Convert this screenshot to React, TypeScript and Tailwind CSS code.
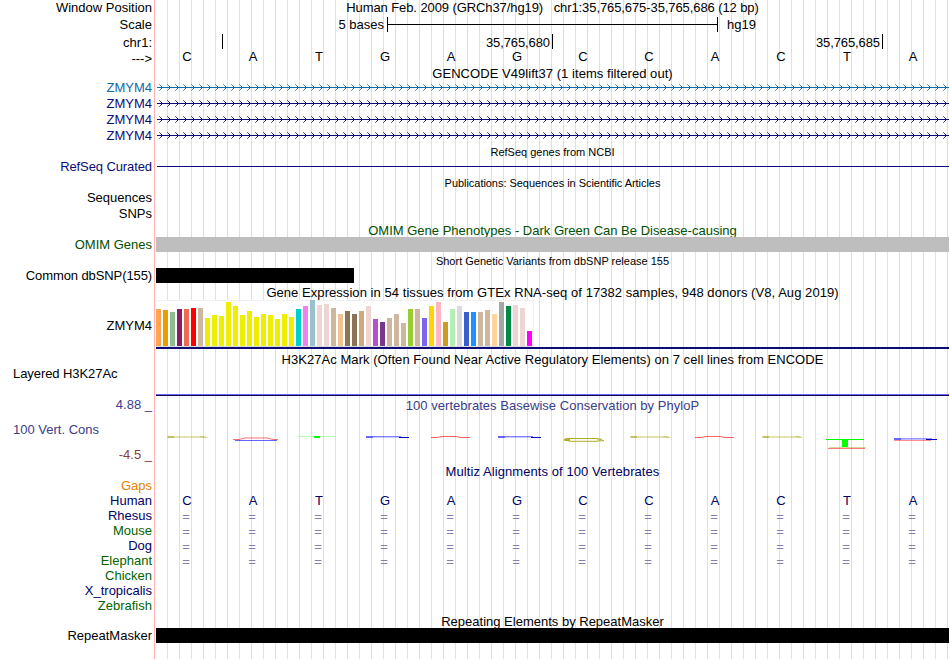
import type { ReactNode } from 'react';
import clsx from 'clsx';

const SEQUENCE = ['C', 'A', 'T', 'G', 'A', 'G', 'C', 'C', 'A', 'C', 'T', 'A'];

// [height in px, colour] for each tissue, in GTEx order
const TISSUES: [number, string][] = [
  [37, '#ffa54f'],
  [36, '#ee9a00'],
  [34, '#8fbc8f'],
  [37, '#8b1c62'],
  [37, '#ee6a50'],
  [38, '#ff0000'],
  [38, '#cdb79e'],
  [28, '#eeee00'],
  [31, '#eeee00'],
  [30, '#eeee00'],
  [44, '#eeee00'],
  [40, '#eeee00'],
  [31, '#eeee00'],
  [35, '#eeee00'],
  [29, '#eeee00'],
  [32, '#eeee00'],
  [31, '#eeee00'],
  [27, '#eeee00'],
  [32, '#eeee00'],
  [29, '#eeee00'],
  [37, '#00cdcd'],
  [40, '#ee82ee'],
  [46, '#9ac0cd'],
  [41, '#eed5d2'],
  [42, '#eed5d2'],
  [38, '#cdb79e'],
  [32, '#eec591'],
  [35, '#8b7355'],
  [32, '#8b7355'],
  [35, '#cdaa7d'],
  [40, '#eed5d2'],
  [27, '#b452cd'],
  [24, '#7a378b'],
  [28, '#cdb79e'],
  [32, '#cdb79e'],
  [23, '#cdb79e'],
  [37, '#9acd32'],
  [37, '#cdb79e'],
  [28, '#7a67ee'],
  [40, '#ffd700'],
  [44, '#ffb6c1'],
  [24, '#cd9b1d'],
  [37, '#b4eeb4'],
  [40, '#d9d9d9'],
  [34, '#3a5fcd'],
  [34, '#1e90ff'],
  [34, '#cdb79e'],
  [36, '#cdb79e'],
  [32, '#ffd39b'],
  [44, '#a6a6a6'],
  [40, '#008b45'],
  [41, '#eed5d2'],
  [38, '#eed5d2'],
  [15, '#ff00ff'],
];

const SPECIES = [
  { name: 'Rhesus', color: 'text-[#000064]', aligned: true },
  { name: 'Mouse', color: 'text-[#006400]', aligned: true },
  { name: 'Dog', color: 'text-[#000064]', aligned: true },
  { name: 'Elephant', color: 'text-[#006400]', aligned: true },
  { name: 'Chicken', color: 'text-[#006400]', aligned: false },
  { name: 'X_tropicalis', color: 'text-[#000064]', aligned: false },
  { name: 'Zebrafish', color: 'text-[#006400]', aligned: false },
];

interface RowProps {
  label?: string;
  height: string;
  className?: string;
  labelClassName?: string;
  children?: ReactNode;
}

function Row({ label, height, className, labelClassName, children }: RowProps) {
  return (
    <div className={clsx('flex shrink-0', height, className)}>
      <div
        className={clsx(
          'w-[156px] shrink-0 flex items-center justify-end pr-1 whitespace-pre',
          labelClassName
        )}
      >
        {label}
      </div>
      <div className="w-[793px] shrink-0">{children}</div>
    </div>
  );
}

function Title({
  height,
  className,
  children,
}: {
  height: string;
  className?: string;
  children: ReactNode;
}) {
  return (
    <Row height={height}>
      <div
        className={clsx(
          'h-full flex items-center justify-center whitespace-pre',
          className
        )}
      >
        {children}
      </div>
    </Row>
  );
}

function Bases({ bases, className }: { bases: string[]; className?: string }) {
  return (
    <div className={clsx('h-full flex items-center', className)}>
      {bases.map((base, i) => (
        <span key={i} className="w-[66px] shrink-0 text-center">
          {base}
        </span>
      ))}
    </div>
  );
}

function Transcript({ id, color }: { id: string; color: string }) {
  return (
    <svg width="793" height="16" shapeRendering="crispEdges" className="block">
      <pattern id={id} x="2" width="8" height="16" patternUnits="userSpaceOnUse">
        <g fill={color}>
          <path d="M1 4h1v1h-1zM1 10h1v1h-1z" opacity="0.6" />
          <path d="M2 5h1v1h-1zM2 9h1v1h-1z" opacity="0.8" />
          <path d="M3 6h1v1h-1zM3 8h1v1h-1z" />
        </g>
      </pattern>
      <rect x="1" width="792" height="16" fill={`url(#${id})`} />
      <rect x="1" y="7" width="792" height="1" fill={color} />
    </svg>
  );
}

function FlatC({ x }: { x: number }) {
  return (
    <g fill="#a8a820">
      <rect x={x} y="22" width="39" height="2" opacity="0.35" />
      <rect x={x + 1} y="22" width="6" height="2" opacity="0.55" />
      <rect x={x + 33} y="22" width="4" height="1" opacity="0.4" />
      <rect x={x + 35} y="23" width="6" height="1" opacity="0.3" />
    </g>
  );
}

function FlatA({ x }: { x: number }) {
  return (
    <path
      d={`M${x} 23.5h6l5-1h14l5 1h9`}
      fill="none"
      stroke="#ff2020"
      strokeWidth="1"
      opacity="0.7"
    />
  );
}

function FlatG({ x }: { x: number }) {
  return (
    <g fill="#0000ff">
      <rect x={x} y="22" width="7" height="2" opacity="0.6" />
      <rect x={x + 7} y="22" width="28" height="1" opacity="0.5" />
      <rect x={x + 7} y="23" width="26" height="1" opacity="0.2" />
      <rect x={x + 33} y="23" width="10" height="1" fill="#0000c8" />
    </g>
  );
}

function Conservation() {
  return (
    <svg width="793" height="36" className="block overflow-visible">
      <FlatC x={11} />
      <g fill="none">
        <path d="M77 25.5h6l6-1.5h22l6 1.5h5" stroke="#ff2020" opacity="0.65" />
        <path d="M79 26.5h42" stroke="#0000ff" opacity="0.6" />
      </g>
      <rect x="142" y="22" width="38" height="1" fill="#b0ffb0" />
      <rect x="158" y="22" width="6" height="2" fill="#00ff00" />
      <FlatG x={210} />
      <FlatA x={275} />
      <FlatG x={342} />
      <g fill="none" stroke="#a0a000">
        <path d="M409 25l5-.5h26l6 .8M409 26l5 1.3h26l8-.8" opacity="0.85" />
        <path d="M408 25.8h6" strokeWidth="2" opacity="0.8" />
        <path d="M441 25.8h5" opacity="0.5" />
      </g>
      <FlatC x={474} />
      <FlatA x={539} />
      <FlatC x={606} />
      <rect x="670" y="25" width="38" height="1" fill="#00ff00" />
      <rect x="686" y="25" width="6" height="8" fill="#00ff00" />
      <rect x="673" y="33" width="37" height="1" fill="#b0b040" opacity="0.5" />
      <rect x="672" y="34" width="37" height="1" fill="#ff4040" opacity="0.7" />
      <g fill="#0000ff">
        <rect x="738" y="24" width="7" height="2" opacity="0.6" />
        <rect x="745" y="24" width="31" height="1" opacity="0.4" />
        <rect x="745" y="25" width="27" height="1" opacity="0.25" />
        <rect x="770" y="25" width="11" height="1" fill="#0000c8" />
        <rect x="738" y="26" width="37" height="1" fill="#ff2020" opacity="0.5" />
      </g>
    </svg>
  );
}

export default function App() {
  return (
    <div className="w-[950px] h-[659px] overflow-hidden bg-white font-['Liberation_Sans',Arial,sans-serif] text-[13px] leading-none text-black">
      <div className="h-full flex flex-col bg-[linear-gradient(90deg,#fff_154px,#ffb0b0_154px,#ffb0b0_155px,#fff_155px,#fff_156px,transparent_156px),repeating-linear-gradient(90deg,transparent_0px,transparent_11px,#dcdcfa_11px,#dcdcfa_12px)]">
        <Row
          label="Window Position"
          height="h-[17px]"
          labelClassName="pb-0.5"
        >
          <div className="h-[15px] flex items-center justify-center whitespace-pre tracking-[-0.09px]">
            {'Human Feb. 2009 (GRCh37/hg19)   chr1:35,765,675-35,765,686 (12 bp)'}
          </div>
        </Row>
        <Row label="Scale" height="h-[17px]" labelClassName="pb-0.5">
          <div className="h-[15px] flex items-center">
            <span className="w-[228px] text-right">5 bases</span>
            <div className="ml-[3px] w-[331px] h-[15px] border-x border-black flex items-center">
              <div className="w-full h-px bg-black" />
            </div>
            <span className="ml-[9px]">hg19</span>
          </div>
        </Row>
        <Row label="chr1:" height="h-4">
          <div className="h-[15px] flex items-center tracking-[-0.1px]">
            <div className="w-[67px] h-full border-r border-black" />
            <div className="w-[330px] h-full border-r border-black flex items-center justify-end pt-0.5 pr-0.5">
              35,765,680
            </div>
            <div className="w-[330px] h-full border-r border-black flex items-center justify-end pt-0.5 pr-0.5">
              35,765,685
            </div>
          </div>
        </Row>
        <Row label="--->" height="h-4">
          <Bases bases={SEQUENCE} className="-ml-0.5 pb-[3px]" />
        </Row>

        {/* Genes */}
        <Title height="h-[14px]" className="tracking-[0.05px]">
          GENCODE V49lift37 (1 items filtered out)
        </Title>
        <Row label="ZMYM4" height="h-4" labelClassName="pb-0.5 text-[#1069ab]">
          <Transcript id="tx-0" color="#1069ab" />
        </Row>
        {['tx-1', 'tx-2', 'tx-3'].map((id) => (
          <Row
            key={id}
            label="ZMYM4"
            height="h-4"
            labelClassName="pb-0.5 text-[#0c0c78]"
          >
            <Transcript id={id} color="#0c0c78" />
          </Row>
        ))}
        <Title height="h-[17px]" className="text-[11px]">
          RefSeq genes from NCBI
        </Title>
        <Row
          label="RefSeq Curated"
          height="h-[13px]"
          labelClassName="pb-0.5 tracking-[-0.1px] text-[#0c0c78]"
        >
          <div className="mt-[5px] ml-px h-px bg-[#0c0c78]" />
        </Row>
        <Title height="h-[18px]" className="text-[11px] tracking-[-0.04px]">
          Publications: Sequences in Scientific Articles
        </Title>
        <Row label="Sequences" height="h-[14px]" labelClassName="pb-[3px]" />
        <Row label="SNPs" height="h-[17px]" labelClassName="pb-0.5" />

        {/* Variants and phenotypes */}
        <Title height="h-[14px]" className="pt-px text-[#005000]">
          OMIM Gene Phenotypes - Dark Green Can Be Disease-causing
        </Title>
        <Row
          label="OMIM Genes"
          height="h-[15px]"
          labelClassName="text-[#005000]"
        >
          <div className="relative h-full bg-[#bebebe]" />
        </Row>
        <Title height="h-4" className="pt-0.5 text-[11px]">
          Short Genetic Variants from dbSNP release 155
        </Title>
        <Row
          label="Common dbSNP(155)"
          height="h-[15px]"
          labelClassName="tracking-[-0.1px]"
        >
          <div className="w-[198px] h-full bg-black" />
        </Row>

        {/* GTEx */}
        <Title height="h-[17px]" className="pt-0.5 tracking-[0.055px]">
          Gene Expression in 54 tissues from GTEx RNA-seq of 17382 samples, 948
          donors (V8, Aug 2019)
        </Title>
        <Row label="ZMYM4" height="h-[49px]" labelClassName="pt-0.5">
          <div className="w-[378px] h-[47px] flex items-end gap-0.5 bg-white border-t border-r border-b border-t-[#f0f0f0] border-r-[#f0f0f0] border-b-[#dcdcdc]">
            {TISSUES.map(([height, color], i) => (
              <div
                key={i}
                className="w-[5px] shrink-0 -mt-px"
                style={{ height, backgroundColor: color }}
              />
            ))}
          </div>
          <div className="h-0.5 bg-[#0c0c78]" />
        </Row>

        {/* Regulation */}
        <Title height="h-[19px]" className="pt-0.5 tracking-[0.05px]">
          H3K27Ac Mark (Often Found Near Active Regulatory Elements) on 7 cell
          lines from ENCODE
        </Title>
        <Row
          label="Layered H3K27Ac"
          height="h-[28px]"
          labelClassName="!justify-start pl-[13px] pb-[18px] tracking-[-0.07px]"
        >
          <div className="h-[26px]" />
          <div className="h-px bg-[#6464ff]" />
          <div className="h-px bg-[#1e0050]" />
        </Row>

        {/* Conservation */}
        <Row
          label="4.88 _"
          height="h-[18px]"
          labelClassName="pb-0.5 text-[#3c3c8c]"
        >
          <div className="h-full flex items-center justify-center tracking-[0.03px] text-[#3c3c8c]">
            100 vertebrates Basewise Conservation by PhyloP
          </div>
        </Row>
        <Row
          label="100 Vert. Cons"
          height="h-[32px]"
          labelClassName="!justify-start pl-[13px] pb-0.5 text-[#3c3c8c]"
        >
          <Conservation />
        </Row>
        <Row
          label="-4.5 _"
          height="h-[18px]"
          labelClassName="pb-0.5 text-[#8c3c3c]"
        />
        <Title height="h-[14px]" className="tracking-[0.08px] text-[#000064]">
          Multiz Alignments of 100 Vertebrates
        </Title>
        <Row
          label="Gaps"
          height="h-[15px]"
          labelClassName="text-[#e68200]"
        />
        <Row label="Human" height="h-[15px]" labelClassName="text-[#000064]">
          <Bases bases={SEQUENCE} className="-ml-0.5 text-[#000064]" />
        </Row>
        {SPECIES.map(({ name, color, aligned }) => (
          <Row
            key={name}
            label={name}
            height="h-[15px]"
            labelClassName={color}
          >
            {aligned && (
              <Bases
                bases={SEQUENCE.map(() => '=')}
                className="-ml-[3px] pt-0.5 text-[#8080b1]"
              />
            )}
          </Row>
        ))}
        <Title height="h-[15px]" className="pt-0.5">
          Repeating Elements by RepeatMasker
        </Title>
        <Row label="RepeatMasker" height="h-[15px]">
          <div className="relative h-full bg-black" />
        </Row>
      </div>
    </div>
  );
}
